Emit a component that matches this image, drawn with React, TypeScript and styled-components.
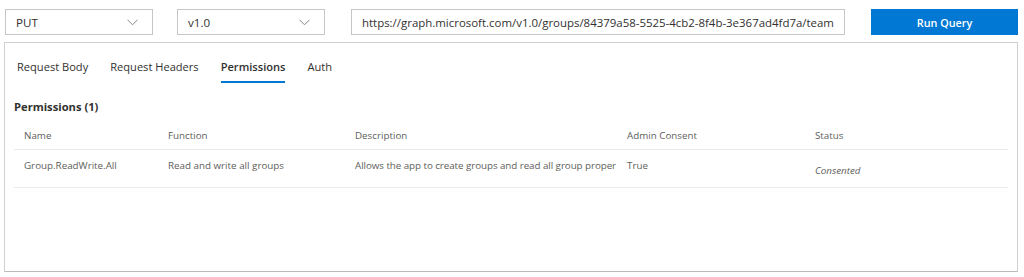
import styled, { createGlobalStyle } from 'styled-components'

const GlobalStyle = createGlobalStyle`
  body {
    margin: 0;
    background: #ffffff;
    font-family: 'Open Sans', 'Noto Sans', sans-serif;
    color: #323130;
  }
`

const Page = styled.div`
  padding: 9px 6px 5px 4px;
  width: 1024px;
  box-sizing: border-box;
`

const TopBar = styled.div`
  display: flex;
  align-items: center;
  padding-left: 1px;
  height: 26px;
`

const Select = styled.div<{ $gap: number }>`
  width: 148px;
  height: 26px;
  box-sizing: border-box;
  border: 1px solid #c8c6c4;
  display: flex;
  align-items: center;
  justify-content: space-between;
  padding: 0 14px 0 10px;
  margin-right: ${(p) => p.$gap}px;
  font-size: 11.6px;
  color: #323130;
`

const UrlBox = styled.div`
  width: 494px;
  height: 26px;
  box-sizing: border-box;
  border: 1px solid #c8c6c4;
  display: flex;
  align-items: center;
  padding-left: 10px;
  margin-right: 26px;
  font-size: 11.45px;
  color: #323130;
  white-space: nowrap;
  overflow: hidden;
`

const RunButton = styled.button`
  width: 147px;
  height: 26px;
  border: none;
  background: #0078d4;
  color: #ffffff;
  font-family: inherit;
  font-size: 10.8px;
  font-weight: 600;
  cursor: pointer;
`

const Panel = styled.div`
  margin-top: 7px;
  height: 230px;
  box-sizing: border-box;
  border: 1px solid #d2d0ce;
  border-bottom-color: #bdbbb9;
  padding: 0 9px 0 9px;
`

const Tabs = styled.div`
  display: flex;
  gap: 22px;
  padding-left: 3px;
`

const Tab = styled.div<{ $active?: boolean }>`
  display: flex;
  flex-direction: column;
  padding-top: 14px;
  font-size: 11.1px;
  line-height: 20px;
  color: #323130;
  font-weight: ${(p) => (p.$active ? 600 : 400)};
  &::after {
    content: '';
    height: 2px;
    margin-top: 4px;
    background: ${(p) => (p.$active ? '#0078d4' : 'transparent')};
  }
`

const Title = styled.div`
  margin-top: 14px;
  font-size: 11.2px;
  font-weight: 700;
  line-height: 20px;
  color: #323130;
`

const Table = styled.div`
  margin-top: 4px;
  display: flex;
  flex-direction: column;
`

const Row = styled.div<{ $height: number }>`
  display: grid;
  grid-template-columns: 144px 187px 272px 188px 1fr;
  height: ${(p) => p.$height}px;
  border-bottom: 1px solid #edebe9;
  font-size: 9.8px;
  line-height: 16px;
  color: #605e5c;
`

const Cell = styled.div<{ $top: number; $italic?: boolean; $tight?: boolean }>`
  padding: ${(p) => p.$top}px 0 0 10px;
  white-space: nowrap;
  overflow: hidden;
  font-style: ${(p) => (p.$italic ? 'italic' : 'normal')};
  letter-spacing: ${(p) => (p.$tight ? '-0.06px' : 'normal')};
`

function Chevron() {
  return (
    <svg width="11" height="7" viewBox="0 0 11 7">
      <polyline points="0.5,0.8 5.5,5.8 10.5,0.8" fill="none" stroke="#8a8886" strokeWidth="1" />
    </svg>
  )
}

const tabs = ['Request Body', 'Request Headers', 'Permissions', 'Auth']
const columns = ['Name', 'Function', 'Description', 'Admin Consent', 'Status']

export default function App() {
  return (
    <>
      <GlobalStyle />
      <Page>
        <TopBar>
          <Select $gap={24}>
            <span>PUT</span>
            <Chevron />
          </Select>
          <Select $gap={26}>
            <span>v1.0</span>
            <Chevron />
          </Select>
          <UrlBox>https://graph.microsoft.com/v1.0/groups/84379a58-5525-4cb2-8f4b-3e367ad4fd7a/team</UrlBox>
          <RunButton>Run Query</RunButton>
        </TopBar>
        <Panel>
          <Tabs>
            {tabs.map((t) => (
              <Tab key={t} $active={t === 'Permissions'}>
                {t}
              </Tab>
            ))}
          </Tabs>
          <Title>Permissions (1)</Title>
          <Table>
            <Row $height={28}>
              {columns.map((c) => (
                <Cell key={c} $top={7}>
                  {c}
                </Cell>
              ))}
            </Row>
            <Row $height={37}>
              <Cell $top={8}>Group.ReadWrite.All</Cell>
              <Cell $top={8}>Read and write all groups</Cell>
              <Cell $top={8} $tight>
                Allows the app to create groups and read all group proper
              </Cell>
              <Cell $top={8}>True</Cell>
              <Cell $top={13} $italic>
                Consented
              </Cell>
            </Row>
          </Table>
        </Panel>
      </Page>
    </>
  )
}
